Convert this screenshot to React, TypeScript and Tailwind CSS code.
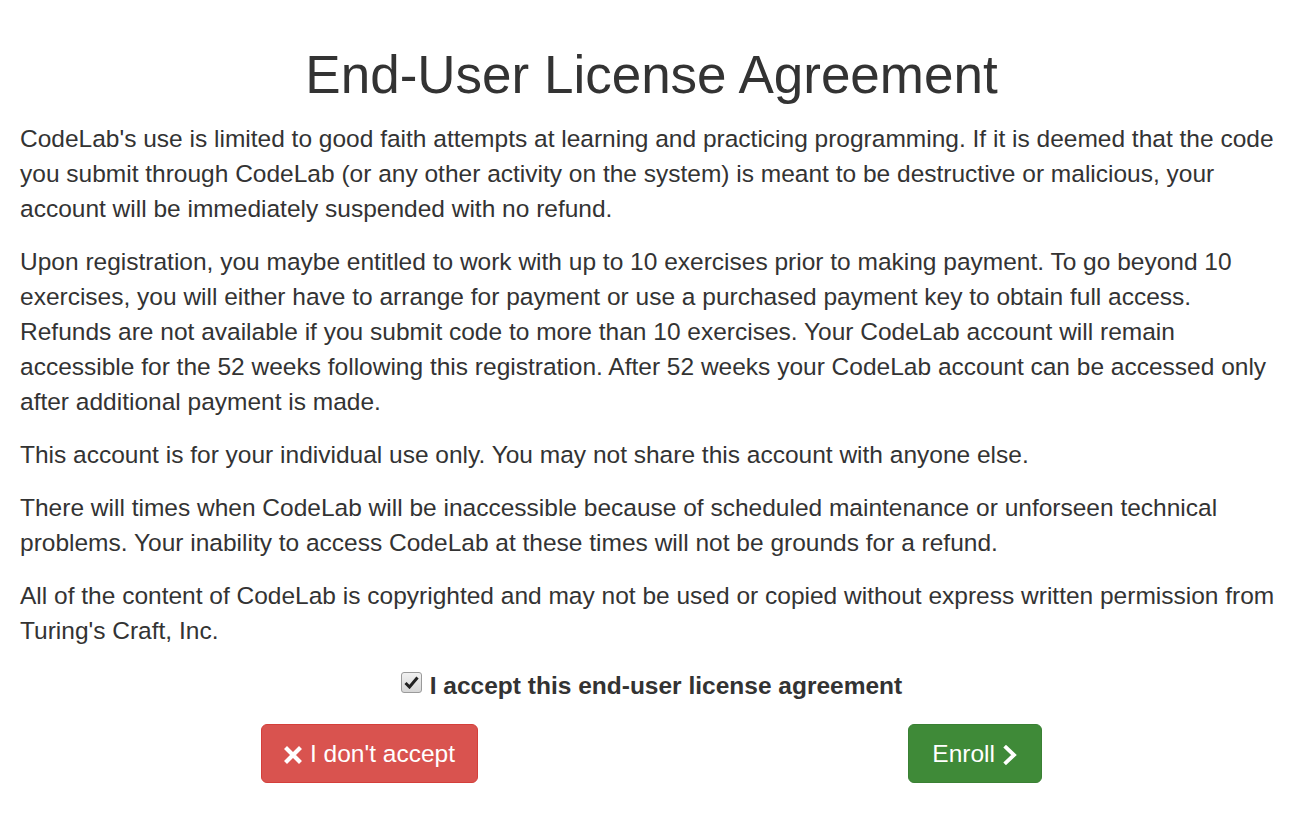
const paragraphs = [
  "CodeLab's use is limited to good faith attempts at learning and practicing programming. If it is deemed that the code you submit through CodeLab (or any other activity on the system) is meant to be destructive or malicious, your account will be immediately suspended with no refund.",
  "Upon registration, you maybe entitled to work with up to 10 exercises prior to making payment. To go beyond 10 exercises, you will either have to arrange for payment or use a purchased payment key to obtain full access. Refunds are not available if you submit code to more than 10 exercises. Your CodeLab account will remain accessible for the 52 weeks following this registration. After 52 weeks your CodeLab account can be accessed only after additional payment is made.",
  "This account is for your individual use only. You may not share this account with anyone else.",
  "There will times when CodeLab will be inaccessible because of scheduled maintenance or unforseen technical problems. Your inability to access CodeLab at these times will not be grounds for a refund.",
  "All of the content of CodeLab is copyrighted and may not be used or copied without express written permission from Turing's Craft, Inc.",
];

function RemoveIcon() {
  return (
    <svg width="18" height="18" viewBox="0 0 18 18" className="shrink-0">
      <path d="M3 3 L15 15 M15 3 L3 15" stroke="white" strokeWidth="4.2" strokeLinecap="square" />
    </svg>
  );
}

function ChevronIcon() {
  return (
    <svg width="16" height="20" viewBox="0 0 16 20" className="shrink-0">
      <path d="M4 2.5 L12 10 L4 17.5" fill="none" stroke="white" strokeWidth="3.8" strokeLinecap="square" />
    </svg>
  );
}

export default function App() {
  return (
    <div className="min-h-screen bg-white text-[#333] font-['Liberation_Sans',Arial,sans-serif]">
      <div className="px-5 pt-[42px]">
        <h1 className="text-center text-[53px] leading-[66px] mb-[13px]">End-User License Agreement</h1>
        {paragraphs.map((p) => (
          <p key={p.slice(0, 20)} className="text-[24.5px] leading-[35px] mb-[18px]">
            {p}
          </p>
        ))}
        <label className="flex items-center justify-center gap-[8px] mt-[20px] text-[24.5px] font-bold leading-[35px]">
          <span className="w-[21px] h-[21px] rounded-[3px] border border-[#9a9a9a] bg-gradient-to-b from-[#f2f2f2] to-[#d6d6d6] flex items-center justify-center -mt-[6px]">
            <svg width="15" height="13" viewBox="0 0 15 13">
              <path d="M1.5 7 L5.5 11 L13.5 1.5" fill="none" stroke="#222" strokeWidth="3" />
            </svg>
          </span>
          I accept this end-user license agreement
        </label>
      </div>
      <div className="flex justify-between px-[261px] mt-[21px]">
        <button className="flex items-center gap-[8px] h-[59px] px-[22px] pt-[2px] rounded-[6px] bg-[#d9534f] border border-[#d43f3a] text-white text-[24.5px]">
          <RemoveIcon />
          I don't accept
        </button>
        <button className="flex items-center gap-[7px] h-[59px] px-[23px] pt-[2px] rounded-[6px] bg-[#3f8a38] border border-[#3a8034] text-white text-[24.5px]">
          Enroll
          <ChevronIcon />
        </button>
      </div>
    </div>
  );
}
